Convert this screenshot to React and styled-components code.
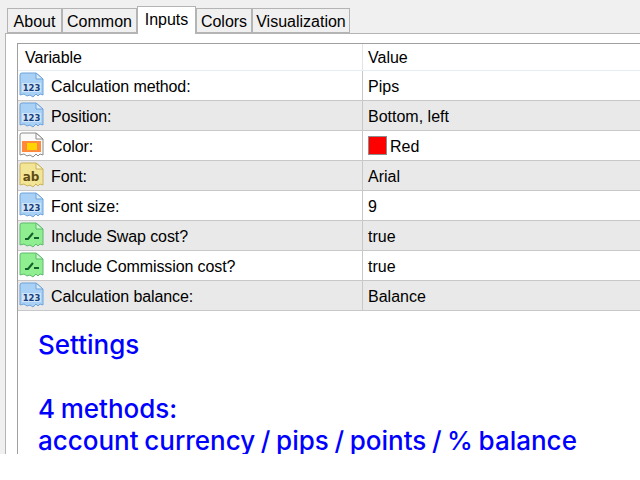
import React from "react";
import styled, { createGlobalStyle } from "styled-components";

const Global = createGlobalStyle`
  html, body { margin: 0; padding: 0; background: #fff; }
  body { font-family: "Liberation Sans", Arial, sans-serif; }
`;

const Window = styled.div`
  width: 640px;
  height: 454px;
  overflow: hidden;
  background: #f0f0f0;
  padding: 6px 0 0 5px;
  box-sizing: border-box;
`;

const TabBar = styled.div`
  display: flex;
  align-items: flex-end;
  height: 27px;
  padding-left: 2px;
  position: relative;
  z-index: 1;
`;

const Tab = styled.div`
  box-sizing: border-box;
  width: ${(p) => p.$w}px;
  height: ${(p) => (p.$active ? 28 : 25)}px;
  margin-bottom: ${(p) => (p.$active ? -1 : 0)}px;
  background: ${(p) => (p.$active ? "#fff" : "#f0f0f0")};
  border: 1px solid #b4b4b4;
  border-bottom: ${(p) => (p.$active ? "none" : "1px solid #b4b4b4")};
  font-size: 16px;
  line-height: ${(p) => (p.$active ? 25 : 26)}px;
  text-align: center;
  color: #000;
`;

const Panel = styled.div`
  height: 421px;
  background: #fff;
  border-top: 1px solid #b4b4b4;
  border-left: 1px solid #b4b4b4;
  padding: 9px 0 0 11px;
`;

const Grid = styled.div`
  height: 412px;
  border-top: 1px solid #a0a0a0;
  border-left: 1px solid #a0a0a0;
`;

const Row = styled.div`
  display: grid;
  grid-template-columns: 344px 1fr;
  box-sizing: border-box;
  height: ${(p) => p.$h || 30}px;
  background: ${(p) => (p.$shaded ? "#e9e9e9" : "#fff")};
  border-bottom: 1px solid ${(p) => (p.$header ? "#e6eef5" : "#c8c8c8")};
  font-size: 16px;
  color: #000;
`;

const Name = styled.div`
  display: flex;
  align-items: center;
  gap: 7px;
  padding-left: ${(p) => (p.$header ? 7 : 1)}px;
  letter-spacing: -0.1px;
`;

const Label = styled.span`
  padding-top: 2px;
`;

const Value = styled.div`
  display: flex;
  align-items: center;
  gap: 3px;
  padding-left: 5px;
  border-left: 1px solid ${(p) => (p.$header ? "#e4e4e4" : "#c8c8c8")};
`;

const Swatch = styled.span`
  width: 19px;
  height: 19px;
  box-sizing: border-box;
  background: #ff0000;
  border: 1px solid #8c8c8c;
`;

const Notes = styled.div`
  padding: 18px 0 0 20px;
  font-family: Inter, "Liberation Sans", sans-serif;
  font-size: 26px;
  font-weight: 500;
  word-spacing: -1.3px;
  line-height: 32px;
  color: #0000ff;
  white-space: nowrap;
`;

const Note = styled.div`
  margin-bottom: ${(p) => p.$gap || 0}px;
`;

const palette = {
  num: { fill: "#a9d0f5", edge: "#6fa3d8", fold: "#dcecfb" },
  text: { fill: "#f3e596", edge: "#c9b25a", fold: "#fbf5cf" },
  bool: { fill: "#8fee8f", edge: "#5cbb6c", fold: "#d2f9d2" },
  color: { fill: "#fafafa", edge: "#8a8a8a", fold: "#ffffff" },
};

// torn-page icon used in front of each variable
const TypeIcon = ({ kind }) => {
  const c = palette[kind];
  return (
    <svg width="25" height="27" viewBox="0 0 25 27">
      <path
        d="M1 3 Q1 1 3 1 H17 L24 7 V23 L21 22 L19 24 L17 22 L14 25 L11 23 L8 24 L5 22 L1 23 Z"
        fill={c.fill}
        stroke={c.edge}
      />
      <path d="M17 1 V7 H24 Z" fill={c.fold} stroke={c.edge} />
      {kind === "num" && (
        <>
          <rect x="3" y="11" width="19" height="9" fill="#cfe4f8" />
          <text x="12.5" y="19" textAnchor="middle" fontFamily="'DejaVu Sans'" fontWeight="700" fontSize="8.5" fill="#173f78">123</text>
        </>
      )}
      {kind === "text" && (
        <text x="12" y="19" textAnchor="middle" fontFamily="'DejaVu Sans'" fontWeight="700" fontSize="12" fill="#5f4d14">ab</text>
      )}
      {kind === "bool" && (
        <path d="M6 17 L9 17 L14 11 M15 16 H20" fill="none" stroke="#14602c" strokeWidth="2" />
      )}
      {kind === "color" && (
        <>
          <rect x="3" y="9" width="19" height="11" fill="#ff8a3c" />
          <rect x="8" y="11" width="10" height="7" fill="#ffd400" />
        </>
      )}
    </svg>
  );
};

const tabs = [
  { label: "About", w: 55 },
  { label: "Common", w: 75 },
  { label: "Inputs", w: 59, active: true },
  { label: "Colors", w: 56 },
  { label: "Visualization", w: 98 },
];

const rows = [
  { kind: "num", name: "Calculation method:", value: "Pips" },
  { kind: "num", name: "Position:", value: "Bottom, left" },
  { kind: "color", name: "Color:", value: "Red", swatch: true },
  { kind: "text", name: "Font:", value: "Arial" },
  { kind: "num", name: "Font size:", value: "9" },
  { kind: "bool", name: "Include Swap cost?", value: "true" },
  { kind: "bool", name: "Include Commission cost?", value: "true" },
  { kind: "num", name: "Calculation balance:", value: "Balance" },
];

export default function App() {
  return (
    <>
      <Global />
      <Window>
        <TabBar>
          {tabs.map((t) => (
            <Tab key={t.label} $w={t.w} $active={t.active}>{t.label}</Tab>
          ))}
        </TabBar>
        <Panel>
          <Grid>
            <Row $h={27} $header>
              <Name $header><Label>Variable</Label></Name>
              <Value $header><Label>Value</Label></Value>
            </Row>
            {rows.map((r, i) => (
              <Row key={r.name} $shaded={i % 2 === 1}>
                <Name>
                  <TypeIcon kind={r.kind} />
                  <Label>{r.name}</Label>
                </Name>
                <Value>
                  {r.swatch && <Swatch />}
                  <Label>{r.value}</Label>
                </Value>
              </Row>
            ))}
            <Notes>
              <Note $gap={32}>Settings</Note>
              <Note>4 methods:</Note>
              <Note>account currency / pips / points / % balance</Note>
            </Notes>
          </Grid>
        </Panel>
      </Window>
    </>
  );
}
